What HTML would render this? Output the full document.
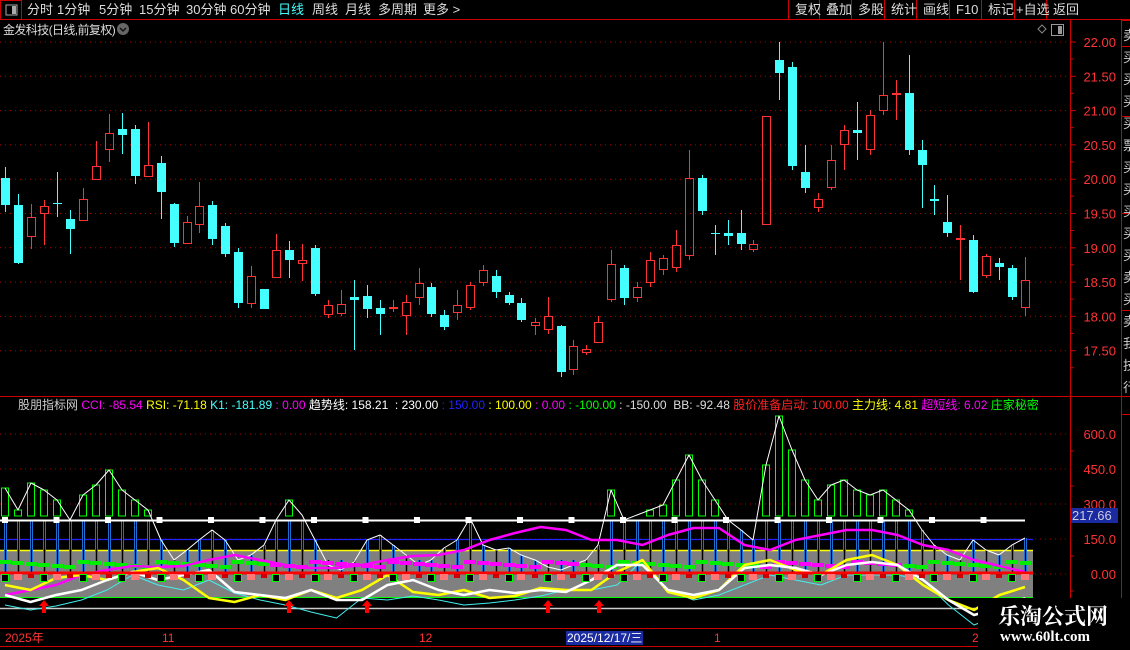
<!DOCTYPE html>
<html><head><meta charset="utf-8"><style>
*{margin:0;padding:0;box-sizing:border-box}
body{width:1130px;height:650px;background:#000;overflow:hidden;position:relative;font-family:"Liberation Sans","Noto Sans CJK SC",sans-serif;color:#ddd}
.t{position:absolute;white-space:nowrap;font-size:12px;line-height:14px}
.b{position:absolute;top:3px;font-size:13px;line-height:14px;white-space:nowrap;color:#ddd}
</style></head><body>
<svg id="s" width="1130" height="650" style="position:absolute;left:0;top:0" xmlns="http://www.w3.org/2000/svg"></svg>
<span class="b" style="left:27px">分时</span><span class="b" style="left:57px">1分钟</span><span class="b" style="left:99px">5分钟</span><span class="b" style="left:139px">15分钟</span><span class="b" style="left:186px">30分钟</span><span class="b" style="left:230px">60分钟</span><span class="b" style="left:278px;color:#4ff">日线</span><span class="b" style="left:312px">周线</span><span class="b" style="left:345px">月线</span><span class="b" style="left:378px">多周期</span><span class="b" style="left:423px">更多 &gt;</span>
<div class="t" style="left:3px;top:23px;letter-spacing:-0.6px">金发科技(日线,前复权)</div>
<span class="b" style="left:795px">复权</span><span class="b" style="left:826px">叠加</span><span class="b" style="left:858px">多股</span><span class="b" style="left:891px">统计</span><span class="b" style="left:923px">画线</span><span class="b" style="left:956px">F10</span><span class="b" style="left:988px">标记</span><span class="b" style="left:1016px">+自选</span><span class="b" style="left:1053px">返回</span>
<div class="t" style="left:18px;top:398px"><span style="color:#ccc">股朋指标网</span> <span style="color:#f0f">CCI: -85.54</span> <span style="color:#ff0">RSI: -71.18</span> <span style="color:#4ff">K1: -181.89</span> <span style="color:#f0f">: 0.00</span> <span style="color:#fff">趋势线: 158.21 &nbsp;: 230.00</span> <span style="color:#22f">: 150.00</span> <span style="color:#ff0">: 100.00</span> <span style="color:#f0f">: 0.00</span> <span style="color:#0f0">: -100.00</span> <span style="color:#ddd">: -150.00 &nbsp;BB: -92.48</span> <span style="color:#f22">股价准备启动: 100.00</span> <span style="color:#ff0">主力线: 4.81</span> <span style="color:#f0f">超短线: 6.02</span> <span style="color:#0f0">庄家秘密</span></div>
<div class="t" style="left:5px;top:631px;color:#f33">2025年</div>
<div class="t" style="left:162px;top:631px;color:#f33">11</div>
<div class="t" style="left:419px;top:631px;color:#f33">12</div>
<div class="t" style="left:566px;top:631px;color:#fff;background:#1a2aa0;padding:0 1px">2025/12/17/三</div>
<div class="t" style="left:714px;top:631px;color:#f33">1</div>
<div class="t" style="left:972px;top:631px;color:#f33">2</div>
<div style="position:absolute;left:978px;top:598px;width:152px;height:52px;background:#000"></div>
<div class="t" style="left:998px;top:604px;font-size:22px;line-height:24px;color:#fff;font-weight:bold;font-family:'Noto Serif CJK SC',serif">乐淘公式网</div>
<div class="t" style="left:1000px;top:630px;font-size:15px;color:#fff;font-weight:bold;font-family:'Liberation Serif',serif">www.60lt.com</div>
<script>
var s=document.getElementById('s'),h='';
function L(x1,y1,x2,y2,c,w,d){h+='<line x1="'+x1+'" y1="'+y1+'" x2="'+x2+'" y2="'+y2+'" stroke="'+c+'" stroke-width="'+(w||1)+'"'+(d?' stroke-dasharray="'+d+'"':'')+'/>';}
function R(x,y,w,hh,f,st){h+='<rect x="'+x+'" y="'+y+'" width="'+w+'" height="'+hh+'" fill="'+f+'"'+(st?' stroke="'+st+'"':'')+'/>';}
function T(x,y,t,c,a){h+='<text x="'+x+'" y="'+y+'" fill="'+c+'" font-size="13" font-family="Liberation Sans,sans-serif"'+(a?' text-anchor="end"':'')+'>'+t+'</text>';}
function P(pts,c,w,fill){h+='<polyline points="'+pts.map(function(p){return p.join(',')}).join(' ')+'" fill="'+(fill||'none')+'" stroke="'+c+'" stroke-width="'+w+'" stroke-linejoin="round"/>';}
L(0,19.5,1130,19.5,'#c00');R(0.5,0.5,21,19,'none','#c00');R(6,5,11,10,'none','#aaa');R(12,6,4,8,'#aaa');
[788,819,851,884,916,949,981,1014,1046].forEach(function(x){L(x+.5,0,x+.5,19,'#c00')});
h+='<circle cx="123" cy="29" r="6" fill="#666"/><path d="M120 28l3 3 3-3" stroke="#111" stroke-width="1.5" fill="none"/>';
h+='<path d="M1042 25l4 4-4 4-4-4z" stroke="#888" fill="none"/>';R(1051.5,24.5,12,11,'none','#999');R(1058,26,4,8,'#999');
L(1070.5,20,1070.5,628,'#c00');L(1121.5,20,1121.5,628,'#c00');L(0,396.5,1130,396.5,'#c00');L(0,628.5,1130,628.5,'#c00');L(0,646.5,1130,646.5,'#c00');
[20,46,116,213,310,414].forEach(function(y){L(1121,y+.5,1130,y+.5,'#c00')});
var pr=['22.00','21.50','21.00','20.50','20.00','19.50','19.00','18.50','18.00','17.50'];
pr.forEach(function(t,i){var y=42+i*34.3;L(0,y,1068,y,'#a00',1,'1 4');L(1070,y,1076,y,'#c00');L(1070,y+17,1074,y+17,'#c00');T(1116,y+5,t,'#f33',1);});
['卖','买','买','买','买','票','买','买','买','买','买','卖','买','卖','我','技','行'].forEach(function(c,i){h+='<text x="1123" y="'+(40+i*22)+'" fill="#ccc" font-size="13" font-family="Noto Sans CJK SC,sans-serif">'+c+'</text>'});
var C=[[5,178,205,167,212,0],[18,205,263,194,264,0],[31,237,217,204,249,1],[44,214,206,200,245,1],[57,203,204,172,217,0],[70,219,229,210,254,0],[83,221,199,188,221,1],[96,180,166,141,180,1],[109,150,133,114,162,1],[122,129,135,113,154,0],[135,129,176,125,184,0],[148,177,165,122,177,1],[161,163,192,156,219,0],[174,204,243,203,247,0],[187,244,222,216,244,1],[199,225,206,182,233,1],[212,205,239,201,245,0],[225,226,254,223,257,0],[238,252,303,248,308,0],[251,304,276,266,308,1],[264,289,309,289,309,0],[276,278,250,234,278,1],[289,250,260,241,278,0],[302,264,260,244,281,1],[315,248,294,245,296,0],[328,315,305,300,318,1],[341,314,304,290,316,1],[354,297,300,280,350,0],[367,296,309,285,318,0],[380,308,314,300,335,0],[393,309,307,300,312,1],[406,316,302,295,335,1],[419,298,283,268,305,1],[431,287,314,283,317,0],[444,315,327,310,330,0],[457,313,305,290,320,1],[470,308,285,282,310,1],[483,283,270,265,286,1],[496,276,292,270,298,0],[509,295,303,292,305,0],[521,303,320,298,322,0],[535,326,322,318,335,1],[548,330,316,297,334,1],[561,326,372,325,377,0],[573,370,346,340,375,1],[586,353,349,345,355,1],[598,343,322,316,343,1],[611,300,264,250,302,1],[624,268,298,265,305,0],[637,298,287,282,302,1],[650,283,260,252,287,1],[663,270,258,255,275,1],[676,268,245,230,272,1],[689,256,178,150,260,1],[702,178,211,175,215,0],[715,233,234,225,255,0],[728,233,236,220,245,0],[741,233,244,210,250,0],[753,250,244,240,252,1],[766,225,116,116,225,1],[779,60,73,42,100,0],[792,67,166,62,170,0],[805,172,188,145,193,0],[818,208,199,193,212,1],[831,188,160,145,190,1],[844,145,130,125,170,1],[857,130,133,102,160,0],[870,150,115,110,155,1],[883,111,95,42,115,1],[896,95,93,80,120,1],[909,93,150,55,155,0],[922,150,165,140,208,0],[934,199,201,185,215,0],[947,222,233,195,237,0],[960,240,238,225,280,1],[973,240,292,235,293,0],[986,276,256,254,278,1],[999,263,267,258,280,0],[1012,268,297,265,300,0],[1025,308,280,257,316,1]];
C.forEach(function(c){var x=c[0],t=Math.min(c[1],c[2]),b=Math.max(c[1],c[2]),col=c[5]?'#f33':'#4ff';
L(x+.5,c[3],x+.5,t,col);L(x+.5,b,x+.5,c[4],col);
if(b-t<2){L(x-4,t+.5,x+5,t+.5,col);}else if(c[5])R(x-3.5,t+.5,8,b-t-1,'none',col);else R(x-4,t,9,b-t,col);});
[['600.0',434],['450.0',469],['300.0',504],['150.0',539],['0.00',574]].forEach(function(a){L(0,a[1],1068,a[1],'#a00',1,'1 4');T(1116,a[1]+5,a[0],'#f33',1);});
[451,486,521,556,591,609].forEach(function(y){L(1070,y,1074,y,'#c00')});
R(1071,508,47,15,'#1a2aa0');T(1072,520,'217.66','#ccd');
R(0,550,1033,48,'#808080');
L(0,550.5,1033,550.5,'#ff0',1.5);L(0,539.5,1033,539.5,'#22f',1.2);L(0,597.5,1033,597.5,'#0f0',1);L(0,608.5,1030,608.5,'#ccc',1.5);
var W=[488,510,483,490,500,520,495,485,470,490,500,510,540,560,550,540,530,540,560,555,545,520,500,515,540,565,570,562,540,535,545,555,565,560,548,540,518,545,550,548,555,560,567,570,565,560,545,490,520,515,510,505,480,455,480,500,520,530,540,465,416,450,480,500,485,480,490,495,490,500,510,530,545,555,560,540,550,555,545,538];
C.forEach(function(c,i){var x=c[0],y=W[i]||540;var top=Math.max(520,Math.min(y,560));L(x+.5,top,x+.5,573,'#1f6fd0',3);L(x+.5,top,x+.5,573,'#000',1);
if(y<515)R(x-3.5,y,7,516-y,'none','#0f0');});
P(C.map(function(c,i){return[c[0],W[i]]}),'#fff',1);
L(0,520.5,1025,520.5,'#fff',2);for(var x=5;x<1030;x+=51.5)R(x-3,517,6,6,'#fff');
function pts(a){return a.map(function(v,i){return[5+i*1020/(a.length-1),v]})}
var mg=[595,590,585,575,570,566,567,566,560,555,560,565,568,568,565,560,556,555,550,540,533,527,530,540,540,545,535,528,528,545,550,540,535,530,530,535,545,550,560,566,572];
var yl=[585,590,578,575,580,572,568,580,598,602,595,600,590,598,590,575,592,595,590,598,596,588,590,590,572,560,592,598,590,565,560,570,575,560,555,565,585,600,610,595,587];
var wt=[595,602,595,590,580,572,580,575,570,592,595,598,590,600,600,585,580,590,595,590,593,590,592,580,565,565,590,595,590,568,565,568,575,565,562,565,580,600,615,608,598];
var cy=[605,610,606,600,590,575,585,590,580,593,600,605,612,618,598,600,596,600,605,603,600,596,590,590,585,560,590,600,595,585,575,580,585,575,575,575,580,605,625,615,608];
// green/magenta dashes above red line
C.forEach(function(c,i){var y=560+((i*7)%6);R(c[0]-6,y,12,4,(i>20&&i<45)||(i>58&&i<70)?'#f0f':'#0e0');});
P(pts(cy),'#4ee',1);P(pts(mg),'#f0f',2.5);P(pts(yl),'#ff0',2.5);P(pts(wt),'#fff',2.5);
L(0,573,1033,573,'#f00',3);
C.forEach(function(c,i){var k=i%3;if(k==0)R(c[0]-3.5,574.5,7,7,'#000','#0f0');else if(k==1)R(c[0]-4,574,8,6,'#f77');else R(c[0]-3,574,6,4,'#c00');});
[44,289,367,548,599].forEach(function(x){h+='<path d="M'+x+' 600l-5 6h3v7h4v-7h3z" fill="#f00"/>'});
s.innerHTML=h;
</script>
</body></html>
